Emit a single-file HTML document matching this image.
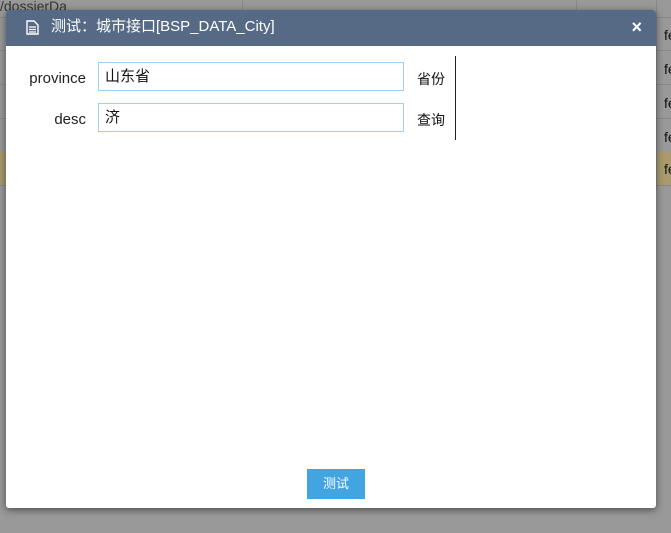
<!DOCTYPE html>
<html><head><meta charset="utf-8"><style>
body{margin:0;width:671px;height:533px;background:#999;position:relative;overflow:hidden;font-family:"Liberation Sans","Noto Sans CJK SC",sans-serif;}
.row{position:absolute;left:0;width:671px;height:33px;border-bottom:1px solid #888;}
.bt{position:absolute;font-size:14px;color:#111;}
.dlg{position:absolute;left:6px;top:10px;width:650px;height:498px;background:#fff;border-radius:3px;box-shadow:0 2px 8px rgba(0,0,0,.5);overflow:hidden;}
.hd{height:36px;background:#566a86;color:#fff;font-size:15px;line-height:34px;position:relative;}
.lbl{position:absolute;font-size:15px;color:#222;text-align:right;width:80px;}
.inp{position:absolute;left:92px;width:306px;height:29px;border:1px solid #9fd0f2;font-size:15px;line-height:28px;padding-left:6px;box-sizing:border-box;color:#111;}
.sfx{position:absolute;left:411px;font-size:14px;color:#111;}
</style></head><body>
<div class="row" style="top:-16px"></div>
<div class="row" style="top:17px"></div>
<div class="row" style="top:51px"></div>
<div class="row" style="top:85px"></div>
<div class="row" style="top:119px"></div>
<div class="row" style="top:152px;background:#a89a6c"></div>
<div class="bt" style="left:0;top:-2px;color:#333">/dossierDa</div>
<div style="position:absolute;left:242px;top:0;height:16px;border-left:1px solid #888"></div>
<div style="position:absolute;left:576px;top:0;height:16px;border-left:1px solid #888"></div>
<div style="position:absolute;left:656px;top:0;height:190px;border-left:1px solid #888"></div>
<div class="bt" style="left:664px;top:27px">fe</div>
<div class="bt" style="left:664px;top:61px">fe</div>
<div class="bt" style="left:664px;top:95px">fe</div>
<div class="bt" style="left:664px;top:129px">fe</div>
<div class="bt" style="left:664px;top:161px">fe</div>
<div class="dlg">
<div class="hd">
<svg style="position:absolute;left:20px;top:10px" width="13" height="15" viewBox="0 0 13 15"><path d="M1 1h7l4 4v9H1z" fill="none" stroke="#fff" stroke-width="1.4"/><path d="M3 7h7M3 9.5h7M3 12h7" stroke="#fff" stroke-width="1.2"/></svg>
<span style="position:absolute;left:45px;">测试：城市接口[BSP_DATA_City]</span>
<span style="position:absolute;right:14px;top:0;font-size:18px;font-weight:bold;">×</span>
</div>
<div class="lbl" style="top:60px">province</div>
<div class="inp" style="top:52px">山东省</div>
<div class="sfx" style="top:59px">省份</div>
<div class="lbl" style="top:101px">desc</div>
<div class="inp" style="top:93px">济</div>
<div class="sfx" style="top:100px">查询</div>
<div style="position:absolute;left:449px;top:46px;height:84px;border-left:1px solid #222"></div>
<div style="position:absolute;left:301px;top:459px;width:58px;height:30px;background:#42a4e0;color:#fff;font-size:13px;line-height:30px;text-align:center">测试</div>
</div>
</body></html>
